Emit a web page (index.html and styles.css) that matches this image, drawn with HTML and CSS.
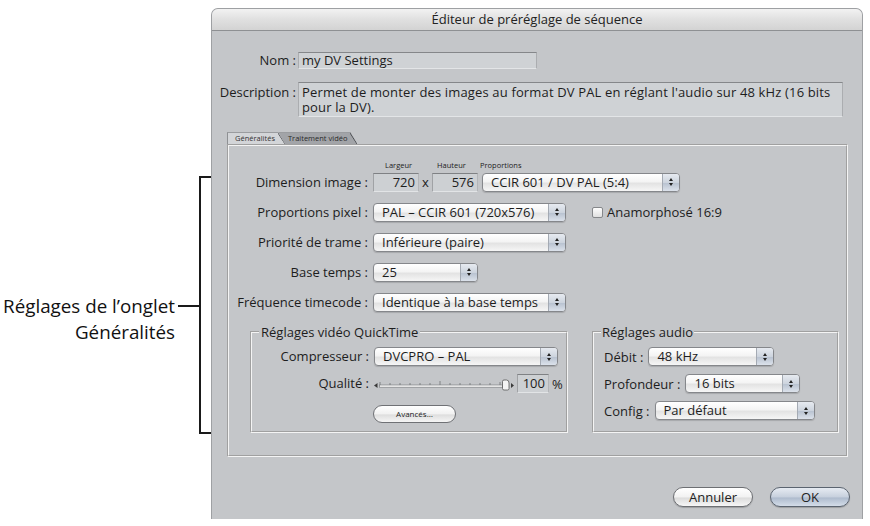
FILE: index.html
```html
<!DOCTYPE html>
<html lang="fr">
<head>
<meta charset="utf-8">
<title>Éditeur de préréglage de séquence</title>
<link rel="stylesheet" href="styles.css">
</head>
<body>
<div class="page">
  <aside class="annot">
    <p class="annot-text">Réglages de l’onglet<br>Généralités</p>
    <span class="annot-tick"></span>
    <span class="annot-bracket"></span>
  </aside>

  <section class="dialog">
    <header class="titlebar">Éditeur de préréglage de séquence</header>
    <div class="dlg-content">
      <div class="meta-row">
        <span class="meta-label">Nom :</span>
        <div class="textfield name-field">my DV Settings</div>
      </div>
      <div class="meta-row desc-row">
        <span class="meta-label desc-label">Description :</span>
        <div class="textfield desc-field">Permet de monter des images au format DV PAL en réglant l'audio sur 48 kHz (16 bits pour la DV).</div>
      </div>

      <nav class="tabs">
        <span class="tab tab-active">Généralités</span>
        <span class="tab tab-inactive">Traitement vidéo</span>
      </nav>

      <div class="panel">
        <div class="col-heads">
          <span class="ch ch-w">Largeur</span>
          <span class="ch ch-h">Hauteur</span>
          <span class="ch">Proportions</span>
        </div>
        <div class="form-grid">
          <span class="lbl">Dimension image :</span>
          <div class="ctl">
            <span class="numfield">720</span>
            <span class="times">x</span>
            <span class="numfield">576</span>
            <div class="popup pw-198 gap4"><span class="popup-val">CCIR 601 / DV PAL (5:4)</span><span class="popup-arrows"></span></div>
          </div>

          <span class="lbl">Proportions pixel :</span>
          <div class="ctl">
            <div class="popup pw-193"><span class="popup-val">PAL – CCIR 601 (720x576)</span><span class="popup-arrows"></span></div>
            <span class="checkbox"></span>
            <span class="check-label">Anamorphosé 16:9</span>
          </div>

          <span class="lbl">Priorité de trame :</span>
          <div class="ctl">
            <div class="popup pw-193"><span class="popup-val">Inférieure (paire)</span><span class="popup-arrows"></span></div>
          </div>

          <span class="lbl">Base temps :</span>
          <div class="ctl">
            <div class="popup pw-105"><span class="popup-val">25</span><span class="popup-arrows"></span></div>
          </div>

          <span class="lbl">Fréquence timecode :</span>
          <div class="ctl">
            <div class="popup pw-193"><span class="popup-val">Identique à la base temps</span><span class="popup-arrows"></span></div>
          </div>
        </div>

        <div class="groups">
          <fieldset class="group group-qt">
            <legend>Réglages vidéo QuickTime</legend>
            <div class="qt-grid">
              <span class="lbl">Compresseur :</span>
              <div class="ctl">
                <div class="popup pw-184"><span class="popup-val">DVCPRO – PAL</span><span class="popup-arrows"></span></div>
              </div>
              <span class="lbl">Qualité :</span>
              <div class="ctl">
                <svg class="slider" width="140" height="14" viewBox="0 0 140 14">
                  <path d="M0 8.5 L3.5 6 L3.5 11 Z" fill="#3a3a3a"/>
                  <rect x="5.5" y="8" width="123" height="2.2" fill="#f6f6f6" stroke="#7d7f82" stroke-width="0.7"/>
                  <g stroke="#6f7174" stroke-width="0.8">
                    <line x1="6" y1="5" x2="6" y2="8"/>
                    <line x1="16" y1="6" x2="16" y2="8"/>
                    <line x1="26" y1="6" x2="26" y2="8"/>
                    <line x1="36" y1="6" x2="36" y2="8"/>
                    <line x1="46" y1="6" x2="46" y2="8"/>
                    <line x1="56" y1="6" x2="56" y2="8"/>
                    <line x1="66" y1="4" x2="66" y2="8"/>
                    <line x1="76" y1="6" x2="76" y2="8"/>
                    <line x1="86" y1="6" x2="86" y2="8"/>
                    <line x1="96" y1="6" x2="96" y2="8"/>
                    <line x1="106" y1="6" x2="106" y2="8"/>
                    <line x1="116" y1="6" x2="116" y2="8"/>
                    <line x1="126" y1="5" x2="126" y2="8"/>
                  </g>
                  <path d="M128.5 4.5 Q128.5 3 130 3 L132.5 3 Q135 3 135 6 L135 11.5 Q135 13 133.5 13 L130 13 Q128.5 13 128.5 11.5 Z" fill="#f4f4f4" stroke="#555" stroke-width="0.8"/>
                  <path d="M137 6 L140 8.5 L137 11 Z" fill="#3a3a3a"/>
                </svg>
                <span class="numfield nf-small">100</span>
                <span class="pct">%</span>
              </div>
            </div>
            <div class="adv-row">
              <span class="btn-small">Avancés…</span>
            </div>
          </fieldset>

          <fieldset class="group group-audio">
            <legend>Réglages audio</legend>
            <div class="audio-row">
              <span class="alabel">Débit :</span>
              <div class="popup pw-126"><span class="popup-val">48 kHz</span><span class="popup-arrows"></span></div>
            </div>
            <div class="audio-row">
              <span class="alabel">Profondeur :</span>
              <div class="popup pw-115"><span class="popup-val">16 bits</span><span class="popup-arrows"></span></div>
            </div>
            <div class="audio-row">
              <span class="alabel">Config :</span>
              <div class="popup pw-160"><span class="popup-val">Par défaut</span><span class="popup-arrows"></span></div>
            </div>
          </fieldset>
        </div>
      </div>

      <div class="buttons">
        <span class="btn">Annuler</span>
        <span class="btn btn-default">OK</span>
      </div>
    </div>
  </section>
</div>
</body>
</html>
```

FILE: styles.css
```css
* { box-sizing: border-box; }
html, body { margin: 0; padding: 0; background: #ffffff; }
body { font-family: "Open Sans", "DejaVu Sans", sans-serif; color: #1d1d1d; }

.page { display: flex; width: 870px; height: 526px; overflow: hidden; }

/* annotation */
.annot { width: 211px; flex: none; display: flex; align-items: flex-start; padding-top: 176px; }
.annot-text { flex: 1; margin: 117px 3px 0 0; text-align: right; font-size: 18.8px; line-height: 26px; white-space: nowrap; color: #111; }
.annot-tick { flex: none; width: 21px; height: 2px; background: #1a1a1a; margin-top: 129px; }
.annot-bracket { flex: none; width: 12px; height: 258px; border: 2px solid #1a1a1a; border-right: 0; }

/* dialog */
.dialog { flex: none; width: 652px; height: 511px; margin-top: 8px; background: #c4c6c9; border: 1px solid #9ea0a3; border-bottom: 0; border-radius: 7px 7px 0 0; display: flex; flex-direction: column; overflow: hidden; }
.titlebar { flex: none; height: 22px; border-bottom: 1px solid #8e9093; background: linear-gradient(#f2f2f2, #e0e0e0 50%, #d3d3d3); text-align: center; font-size: 13px; line-height: 21px; color: #222; }
.dlg-content { flex: 1; padding-top: 21px; display: flex; flex-direction: column; }

.meta-row { display: flex; align-items: flex-start; }
.meta-label { width: 86px; flex: none; text-align: right; padding-right: 2px; font-size: 13px; line-height: 17px; white-space: nowrap; }
.desc-row { margin-top: 13px; }
.desc-label { padding-top: 3px; line-height: 15px; }
.textfield { background: #cfd2d5; border: 1px solid; border-color: #85878a #abadb0 #e3e5e7 #abadb0; font-size: 13px; padding-left: 3px; }
.name-field { width: 239px; height: 17px; line-height: 15px; }
.desc-field { width: 545px; height: 35px; line-height: 15px; padding-top: 2px; letter-spacing: 0.15px; }

/* tabs */
.tabs { display: flex; height: 12px; margin: 15px 0 0 15px; font-size: 7.5px; line-height: 12px; }
.tab { position: relative; padding: 0 10px 0 7px; white-space: nowrap; clip-path: polygon(0 0, calc(100% - 7px) 0, 100% 100%, 0 100%); border-top: 1px solid #9a9c9f; line-height: 11px; }
.tab::after { content: ""; position: absolute; right: 0; top: 0; width: 7px; height: 100%; background: linear-gradient(to top right, transparent calc(50% - 0.8px), #4e5054 50%, transparent calc(50% + 0.8px)); }
.tab-active { z-index: 1; background: #d3d5d8; border-left: 1px solid #8e9093; color: #333; }
.tab-inactive { margin-left: -7px; padding-left: 10px; background: #a2a4a8; color: #2a2a2a; }

/* panel */
.panel { margin-left: 15px; width: 621px; height: 313px; border: 2px groove #f4f4f4; flex: none; }
.col-heads { display: flex; margin: 15px 0 0 156px; height: 9px; font-size: 7.5px; line-height: 9px; color: #222; }
.ch-w { width: 52px; }
.ch-h { width: 43px; }

.form-grid { margin-top: 2px; display: grid; grid-template-columns: 139px 1fr; column-gap: 5px; row-gap: 10px; grid-auto-rows: 20px; }
.lbl { text-align: right; font-size: 13px; line-height: 20px; white-space: nowrap; }
.ctl { display: flex; align-items: center; }

.numfield { flex: none; width: 46px; height: 19px; background: #cdd0d3; border: 1px solid; border-color: #7f8184 #b3b5b8 #e2e4e6 #a0a2a5; text-align: right; padding-right: 3px; font-size: 13px; line-height: 17px; }
.times { width: 13px; text-align: center; font-size: 13px; line-height: 17px; }
.nf-small { width: 32px; margin-left: 3px; }
.pct { margin-left: 3px; font-size: 13px; }

.popup { flex: none; display: flex; height: 19px; border: 1px solid #85878b; border-radius: 4px; background: linear-gradient(#ffffff, #f4f4f4 45%, #e3e3e3 55%, #f6f6f6); box-shadow: 0 1px 1px rgba(0,0,0,0.15); font-size: 13px; line-height: 17px; overflow: hidden; }
.popup-val { flex: 1; padding-left: 8px; white-space: nowrap; overflow: hidden; }
.popup-arrows { flex: none; width: 17px; border-left: 1px solid #a4aab3; background: linear-gradient(#e6eaf0, #cdd4de 50%, #b9c3d1 55%, #dce2eb); display: flex; flex-direction: column; align-items: center; justify-content: center; gap: 2px; }
.popup-arrows::before { content: ""; border-left: 2.5px solid transparent; border-right: 2.5px solid transparent; border-bottom: 3px solid #222; }
.popup-arrows::after { content: ""; border-left: 2.5px solid transparent; border-right: 2.5px solid transparent; border-top: 3px solid #222; }
.gap4 { margin-left: 4px; }
.pw-198 { width: 198px; }
.pw-193 { width: 193px; }
.pw-184 { width: 184px; }
.pw-160 { width: 160px; }
.pw-126 { width: 126px; }
.pw-115 { width: 115px; }
.pw-105 { width: 105px; }

.checkbox { flex: none; width: 11px; height: 11px; margin-left: 26px; margin-right: 4px; border: 1px solid #85878a; border-radius: 2px; background: linear-gradient(#fdfdfd, #e0e0e0); }
.check-label { font-size: 13px; white-space: nowrap; }

/* groups */
.groups { display: flex; gap: 24px; margin: 11px 0 0 21px; }
.group { margin: 0; border: 2px groove #f4f4f4; min-width: 0; }
.group legend { font-size: 13px; line-height: 18px; }
.group-qt { width: 318px; padding: 6px 0 8px 7px; }
.group-qt legend { padding: 0 2px; }
.group-audio { width: 247px; padding: 6px 0 8px 7px; }
.group-audio legend { padding: 0 1px; }

.qt-grid { display: grid; grid-template-columns: 110px 1fr; column-gap: 5px; row-gap: 8px; grid-auto-rows: 19px; }
.qt-grid .lbl { line-height: 19px; }
.slider { flex: none; display: block; }
.adv-row { margin-top: 12px; padding-left: 114px; height: 18px; }
.btn-small { display: block; width: 83px; height: 18px; border-radius: 9px; border: 1px solid #6f7175; background: linear-gradient(#ffffff, #f1f1f1 50%, #dedede 55%, #f5f5f5); font-size: 8px; line-height: 16px; text-align: center; color: #222; }

.audio-row { display: flex; align-items: center; gap: 5px; height: 19px; padding-left: 3px; }
.audio-row + .audio-row { margin-top: 8px; }
.alabel { font-size: 13px; white-space: nowrap; }

/* buttons */
.buttons { display: flex; justify-content: flex-end; gap: 17px; margin-top: 30px; padding-right: 12px; }
.btn { width: 80px; height: 20px; border-radius: 10px; border: 1px solid #6d6f73; background: linear-gradient(#ffffff, #f2f2f2 50%, #dcdcdc 55%, #f6f6f6); font-size: 13px; line-height: 18px; text-align: center; color: #222; box-shadow: 0 1px 1px rgba(0,0,0,0.2); }
.btn-default { border-color: #5b6470; background: linear-gradient(#e6ebf2, #c7d0dd 50%, #aebbcd 55%, #d4dde9); }
```
